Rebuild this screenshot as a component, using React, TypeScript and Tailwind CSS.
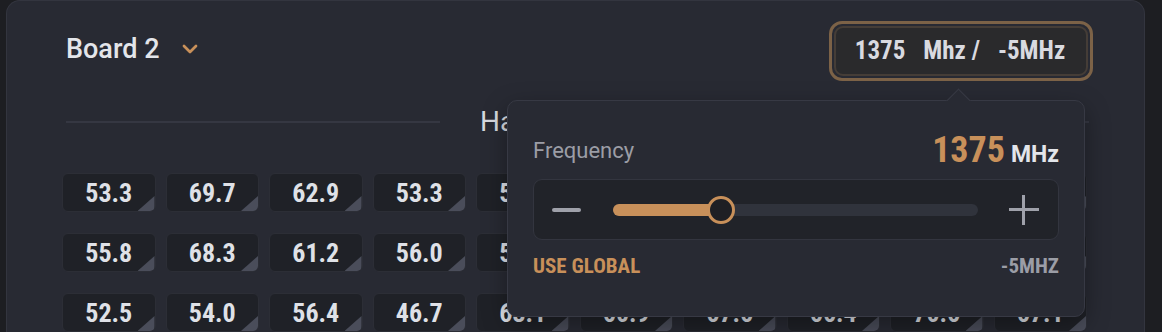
import { ChevronDown } from 'lucide-react';

const rows = [
  ['53.3', '69.7', '62.9', '53.3', '58.1', '60.4', '66.2', '59.7', '64.8', '61.5'],
  ['55.8', '68.3', '61.2', '56.0', '57.9', '62.3', '64.1', '60.5', '63.3', '60.8'],
  ['52.5', '54.0', '56.4', '46.7', '63.1', '60.9', '67.6', '66.4', '70.6', '67.1'],
];

const cond = "font-['Roboto',sans-serif] [font-stretch:condensed]";

function Cell({ value }: { value: string }) {
  return (
    <div className="relative flex h-[39px] items-center justify-center overflow-hidden rounded-[6px] border border-[#2c2e36] bg-[#1f2127]">
      <span className={`${cond} text-[26px] font-bold leading-none text-[#dfe1e7]`}>{value}</span>
      <div className="absolute bottom-0 right-0 h-[15px] w-[17px] bg-[#4a4d5a] [clip-path:polygon(100%_0,100%_100%,0_100%)]" />
    </div>
  );
}

export default function App() {
  return (
    <div className="h-[332px] w-[1162px] overflow-hidden bg-[#1d1e22] pl-[6px] pr-[17px] font-['Roboto',sans-serif]">
      <div className="relative h-[360px] rounded-t-[14px] border border-b-0 border-[#33353f] bg-[#282a33] px-[55px] pt-[20px]">
        {/* Header */}
        <div className="flex h-[60px] items-center justify-between">
          <div className="mb-[4px] flex items-center gap-[18px] pl-[4px]">
            <span className="text-[27px] font-medium text-[#e3e5ea]">Board 2</span>
            <ChevronDown className="h-[24px] w-[24px] text-[#c8905a]" strokeWidth={2.75} />
          </div>
          <div className="mr-[-4px] rounded-[13px] border-[3px] border-[#7c6247] p-[2px]">
            <div className={`${cond} flex h-[50px] w-[254px] items-center justify-center gap-[18px] rounded-[9px] border-2 border-[#453d37] bg-[#2a2a2c] pr-[2px] text-[25px] font-bold text-[#d9dae0]`}>
              <span>1375</span>
              <span>Mhz /</span>
              <span>-5MHz</span>
            </div>
          </div>
        </div>

        {/* Title */}
        <div className="mt-[24px] flex h-[34px] items-center gap-[40px] pl-[4px]">
          <div className="h-[2px] w-[374px] bg-[#353742]" />
          <span className="text-[28px] text-[#d6d8de]">Hashrate</span>
          <div className="h-[2px] flex-1 bg-[#353742]" />
        </div>

        {/* Grid */}
        <div className="mt-[34px] grid w-[1025px] grid-cols-10 gap-x-[10px] gap-y-[21px]">
          {rows.flat().map((v, i) => (
            <Cell key={i} value={v} />
          ))}
        </div>

        {/* Frequency popover */}
        <div className="absolute left-[500px] top-[99px] h-[217px] w-[578px] rounded-[10px] border border-[#373944] bg-[#282a33] px-[25px] pt-[34px] shadow-[0_8px_24px_rgba(0,0,0,0.35)]">
          <div className="absolute left-[442px] top-[-9px] h-[17px] w-[17px] rotate-45 border-l border-t border-[#373944] bg-[#282a33]" />
          <div className="flex h-[30px] items-center justify-between">
            <span className="text-[22px] text-[#9b9da6]">Frequency</span>
            <div className="flex items-baseline gap-[6px]">
              <span className={`${cond} text-[36px] font-bold leading-none text-[#c8905a]`}>1375</span>
              <span className="text-[23px] font-bold leading-none text-[#e3e5ea]">MHz</span>
            </div>
          </div>
          <div className="mt-[14px] flex h-[61px] items-center rounded-[9px] border border-[#33353f] bg-[#212329] pl-[18px] pr-[19px]">
            <div className="h-[4px] w-[29px] rounded-full bg-[#9fa1aa]" />
            <div className="relative ml-[32px] mr-[31px] h-[12px] flex-1 rounded-full bg-[#30333c]">
              <div className="h-full w-[108px] rounded-full bg-[#c8905a]" />
              <div className="absolute left-[94px] top-[-8px] h-[28px] w-[28px] rounded-full border-[3px] border-[#c8905a] bg-[#1e1f24]" />
            </div>
            <div className="relative h-[30px] w-[30px]">
              <div className="absolute left-0 top-[13px] h-[3px] w-[30px] bg-[#9fa1aa]" />
              <div className="absolute left-[13px] top-0 h-[30px] w-[3px] bg-[#9fa1aa]" />
            </div>
          </div>
          <div className="mt-[16px] flex h-[20px] items-center justify-between">
            <span className={`${cond} text-[21px] font-bold leading-none text-[#c8905a]`}>USE GLOBAL</span>
            <span className={`${cond} text-[21px] font-bold leading-none text-[#9b9da6]`}>-5MHZ</span>
          </div>
        </div>
      </div>
    </div>
  );
}
